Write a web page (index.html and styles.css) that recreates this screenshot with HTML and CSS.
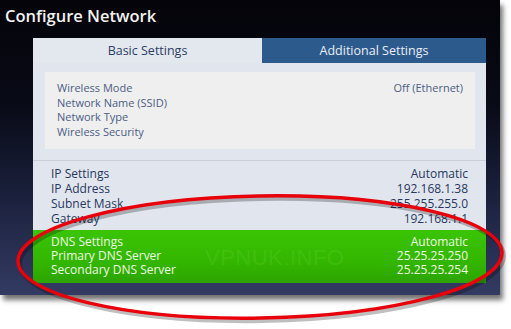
FILE: index.html
```html
<!DOCTYPE html>
<html lang="en">

<head>
    <meta charset="UTF-8">
    <title>Configure Network</title>
    <link rel="stylesheet" href="styles.css">
</head>

<body>
    <div class="screen">
        <h1 class="title">Configure Network</h1>

        <div class="panel">
            <div class="tabs">
                <div class="tab active">Basic Settings</div>
                <div class="tab">Additional Settings</div>
            </div>

            <div class="panel-body">
                <div class="wireless">
                    <div class="row"><span>Wireless Mode</span><span>Off (Ethernet)</span></div>
                    <div class="row"><span>Network Name (SSID)</span><span></span></div>
                    <div class="row"><span>Network Type</span><span></span></div>
                    <div class="row"><span>Wireless Security</span><span></span></div>
                </div>

                <div class="ip">
                    <div class="row"><span>IP Settings</span><span>Automatic</span></div>
                    <div class="row"><span>IP Address</span><span>192.168.1.38</span></div>
                    <div class="row"><span>Subnet Mask</span><span>255.255.255.0</span></div>
                    <div class="row"><span>Gateway</span><span>192.168.1.1</span></div>
                </div>
            </div>

            <div class="dns">
                <div class="watermark">VPNUK.INFO</div>
                <div class="row"><span>DNS Settings</span><span>Automatic</span></div>
                <div class="row"><span>Primary DNS Server</span><span>25.25.25.250</span></div>
                <div class="row"><span>Secondary DNS Server</span><span>25.25.25.254</span></div>
            </div>
        </div>
    </div>

    <!-- red marker drawn over the dns block -->
    <svg class="marker" width="511" height="329" viewBox="0 0 511 329">
        <ellipse cx="260" cy="257" rx="242" ry="61" fill="none" stroke="rgba(0,0,0,0.25)" stroke-width="4" transform="translate(2 3) rotate(-1 260 257)"/>
        <ellipse cx="260" cy="257" rx="242" ry="61" fill="none" stroke="#e8000a" stroke-width="3.5" transform="rotate(-1 260 257)"/>
    </svg>
</body>

</html>
```

FILE: styles.css
```css
body {
    margin: 0;
    padding: 0;
    background: #ffffff;
    font-family: 'Open Sans', 'DejaVu Sans', sans-serif;
    position: relative;
    width: 511px;
    height: 329px;
    overflow: hidden;
}

.screen {
    width: 500px;
    height: 295px;
    background: linear-gradient(to bottom, #040409 0%, #080a16 35%, #1d2340 70%, #343b63 100%);
    box-shadow: 3px 5px 5px rgba(0, 0, 0, 0.55);
    padding-top: 1px;
    box-sizing: border-box;
}

.title {
    margin: 3px 0 0 5px;
    color: #f2f2f2;
    font-size: 16.5px;
    font-weight: 600;
    height: 34px;
    line-height: 24px;
}

.panel {
    margin-left: 33px;
    width: 453px;
}

.tabs {
    display: flex;
    height: 25px;
}

.tab {
    flex: 0 0 224px;
    background: #2d5a8c;
    color: #e8eef6;
    font-size: 12.5px;
    line-height: 25px;
    text-align: center;
}

.tab.active {
    flex: 0 0 229px;
    background: #e3e7ee;
    color: #2c3e66;
}

.panel-body {
    background: #e1e6ee;
    padding: 9px 0 0;
    height: 167px;
    box-sizing: border-box;
}

.wireless {
    margin: 0 11px 0 12px;
    background: #efefef;
    padding: 9px 12px 7px;
    height: 77px;
    box-sizing: border-box;
    color: #4d5d85;
    font-size: 11px;
}

.row {
    display: flex;
    justify-content: space-between;
    line-height: 14.7px;
}

.ip {
    margin-top: 11px;
    border-top: 1px solid #c9d0dc;
    padding: 5px 18px 0 18px;
    color: #27375e;
    font-size: 12px;
}

.ip .row {
    line-height: 15px;
}

.dns {
    position: relative;
    height: 53px;
    background: linear-gradient(to bottom, #3bc405 0%, #33b600 60%, #2ca400 100%);
    padding: 5px 18px 0 18px;
    box-sizing: border-box;
    color: #eef8e6;
    font-size: 12px;
}

.dns .row {
    line-height: 14px;
    position: relative;
}

.watermark {
    position: absolute;
    left: 172px;
    top: 15px;
    font-family: 'Liberation Sans', sans-serif;
    font-size: 22px;
    letter-spacing: 0.5px;
    color: rgba(110, 215, 60, 0.22);
}

.marker {
    position: absolute;
    left: 0;
    top: 0;
}
```
